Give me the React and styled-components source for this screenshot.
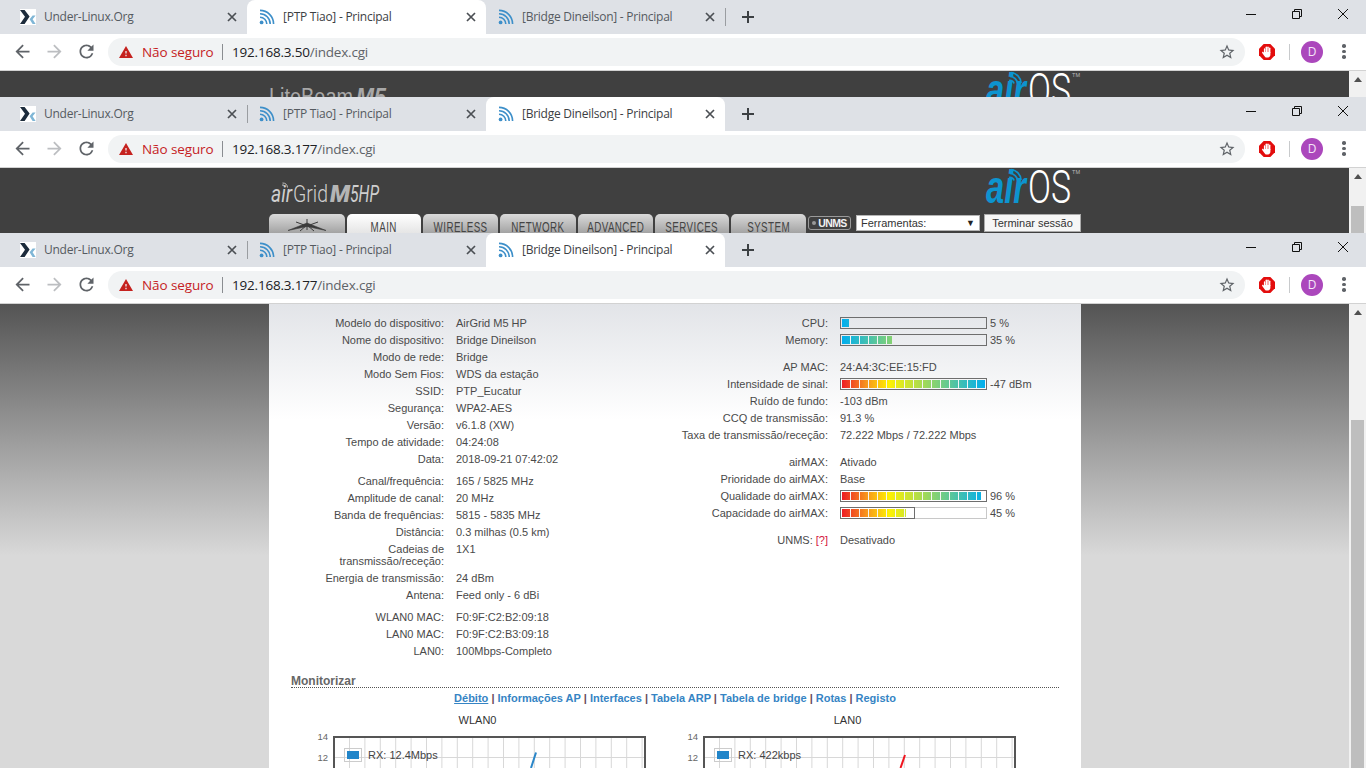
import styled, { createGlobalStyle } from "styled-components";

const GlobalStyle = createGlobalStyle`
  html, body {
    margin: 0;
    height: 768px;
    overflow: hidden;
    background: #404040;
  }
  * { box-sizing: border-box; }
`;

const Browser = styled.div`
  height: ${(p) => p.$height}px;
  display: flex;
  flex-direction: column;
  overflow: hidden;
`;

const TabStrip = styled.div`
  height: 34px;
  flex: none;
  display: flex;
  padding-left: 8px;
  background: #dee1e6;
`;

const Tab = styled.div`
  position: relative;
  width: 239px;
  height: 34px;
  display: flex;
  align-items: center;
  padding: 0 10px 0 12px;
  border-radius: 8px 8px 0 0;
  background: ${(p) => (p.$active ? "#fff" : "transparent")};

  &::after {
    content: "";
    display: ${(p) => (p.$sep ? "block" : "none")};
    position: absolute;
    right: -1px;
    top: 8px;
    width: 1px;
    height: 18px;
    background: #9a9da1;
  }
`;

const TabTitle = styled.span`
  flex: 1;
  margin-left: 8px;
  padding-bottom: 1px;
  font: 12px "Open Sans", "Noto Sans", sans-serif;
  letter-spacing: -0.25px;
  color: ${(p) => (p.$active ? "#3c4043" : "#555a60")};
  white-space: nowrap;
`;

const NewTab = styled.div`
  width: 16px;
  height: 34px;
  margin-left: 15px;
  display: flex;
  align-items: center;
  justify-content: center;
  color: #3c4043;
`;

const WindowControls = styled.div`
  margin-left: auto;
  display: flex;
  height: 28px;
`;

const WindowButton = styled.div`
  width: 46px;
  display: flex;
  align-items: center;
  justify-content: center;
`;

const Toolbar = styled.div`
  height: 37px;
  flex: none;
  display: flex;
  align-items: center;
  padding: 0 0 1px 6px;
  background: #fff;
  border-bottom: 1px solid #d2d2d2;
`;

const NavButton = styled.div`
  width: 32px;
  display: flex;
  justify-content: center;
  color: ${(p) => (p.$disabled ? "#bcbec1" : "#5f6368")};
`;

const Omnibox = styled.div`
  margin-left: 6px;
  flex: 1;
  height: 28px;
  display: flex;
  align-items: center;
  padding: 0 9px 0 11px;
  border-radius: 14px;
  background: #f1f3f4;
  font: 14px "Open Sans", "Noto Sans", sans-serif;
`;

const WarningSvg = styled.svg`
  flex: none;
`;

const Insecure = styled.span`
  margin-left: 9px;
  color: #c5221f;
  font-size: 13.5px;
  letter-spacing: -0.1px;
  width: 72px;
  white-space: nowrap;
`;

const OmniDivider = styled.span`
  width: 1px;
  height: 16px;
  margin: 0 9px 0 8px;
  background: #8a8d91;
`;

const Host = styled.span`
  color: #202124;
  font-size: 13.5px;
  letter-spacing: -0.2px;
`;

const Path = styled.span`
  color: #5f6368;
  font-size: 13.5px;
  letter-spacing: -0.2px;
`;

const StarSlot = styled.div`
  margin-left: auto;
  display: flex;
  color: #5f6368;
`;

const Actions = styled.div`
  width: 121px;
  flex: none;
  display: flex;
  align-items: center;
  padding-left: 14px;
`;

const ActionDivider = styled.span`
  width: 1px;
  height: 16px;
  margin: 0 11px 0 14px;
  background: #c8cacc;
`;

const Avatar = styled.div`
  width: 22px;
  height: 22px;
  border-radius: 50%;
  display: flex;
  align-items: center;
  justify-content: center;
  background: #ab47bc;
  color: #f5e6f8;
  font: 12px "Open Sans", sans-serif;
`;

const MenuDots = styled.div`
  margin-left: 19px;
  display: flex;
  flex-direction: column;
  gap: 2px;

  span {
    width: 3.5px;
    height: 3.5px;
    border-radius: 50%;
    background: #5f6368;
  }
`;

const Viewport = styled.div`
  flex: 1;
  min-height: 0;
  display: flex;
`;

const PageArea = styled.div`
  flex: 1;
  display: flex;
  justify-content: center;
  overflow: hidden;
  background: ${(p) =>
    p.$light ? "linear-gradient(#545454 0, #d9d9d9 252px)" : "#404040"};
`;

const Scrollbar = styled.div`
  width: 17px;
  flex: none;
  display: flex;
  flex-direction: column;
  align-items: center;
  background: #f1f1f1;
  overflow: hidden;
`;

const ScrollArrow = styled.div`
  margin-top: 6px;
  width: 0;
  height: 0;
  border-left: 4px solid transparent;
  border-right: 4px solid transparent;
  border-bottom: 5px solid #505050;
`;

const ScrollThumb = styled.div`
  width: 13px;
  flex: 1;
  margin-top: ${(p) => p.$top - 11}px;
  background: #bebebe;
`;

const Panel = styled.div`
  width: 812px;
  flex: none;
  margin-left: 1px;
`;

const Masthead = styled.div`
  height: 46px;
  display: flex;
  justify-content: space-between;
`;

const NavRow = styled.div`
  height: 26px;
  display: flex;
`;

const NavTab = styled.div`
  width: ${(p) => p.$w}px;
  height: 26px;
  margin-right: 2px;
  display: flex;
  align-items: center;
  justify-content: center;
  border-radius: 5px 5px 0 0;
  color: #444;
  background: ${(p) =>
    p.$active
      ? "linear-gradient(#fff, #dcdcdc)"
      : "linear-gradient(#dadada, #8f8f8f)"};
`;

const NavLabel = styled.span`
  display: inline-block;
  font: 14px "Liberation Sans", Arial, sans-serif;
  letter-spacing: 0.6px;
  transform: scaleX(0.7);
  white-space: nowrap;
`;

const DishSvg = styled.svg`
  margin-bottom: 4px;
`;

const UnmsBadge = styled.div`
  width: 43px;
  height: 14px;
  margin-top: 2px;
  display: flex;
  align-items: center;
  justify-content: center;
  gap: 2px;
  border: 1px solid #9a9a9a;
  border-radius: 3px;
  color: #f2f2f2;
  font: bold 10.5px "Liberation Sans", Arial, sans-serif;
  letter-spacing: -0.6px;

  i {
    width: 4px;
    height: 4px;
    flex: none;
    border-radius: 50%;
    background: #999;
  }
`;

const ToolSelect = styled.div`
  width: 124px;
  height: 16px;
  margin: 1px 0 0 5px;
  display: flex;
  align-items: center;
  justify-content: space-between;
  padding: 0 4px;
  background: #fff;
  border: 1px solid #b5b5b5;
  color: #333;
  font: 11px "Liberation Sans", Arial, sans-serif;

  b {
    font-size: 9px;
    color: #222;
  }
`;

const LogoutButton = styled.div`
  width: 97px;
  height: 18px;
  margin-left: 4px;
  display: flex;
  align-items: center;
  justify-content: center;
  background: #f6f6f6;
  border: 1px solid #ababab;
  color: #333;
  font: 11px "Liberation Sans", Arial, sans-serif;
`;

const StatusPanel = styled.div`
  height: 100%;
  padding: 10px 22px 0;
  background: linear-gradient(#e2e4e8 0, #fff 116px);
  color: #4a4a4a;
  font: 11px "Liberation Sans", Arial, sans-serif;
`;

const Columns = styled.div`
  display: grid;
  grid-template-columns: 387px 1fr;
`;

const Group = styled.div`
  margin-bottom: ${(p) => p.$gap}px;
`;

const InfoRow = styled.div`
  display: flex;
  padding: 2.5px 0;
  line-height: 12px;
`;

const Label = styled.div`
  width: ${(p) => p.$w}px;
  flex: none;
  margin-left: ${(p) => p.$indent}px;
  text-align: right;
`;

const Value = styled.div`
  margin-left: 12px;
  display: flex;
  align-items: flex-start;
  white-space: nowrap;
`;

const Hint = styled.span`
  color: #d3143c;
`;

const Track = styled.div`
  position: relative;
  width: 147px;
  height: 12px;
  padding: 1px;
  margin-right: 3px;
  border: 1px solid ${(p) => (p.$frame ? "#c8c8c8" : "#6e6e6e")};
  background: ${(p) => (p.$frame ? "#fff" : "transparent")};
`;

const SCALE = "#ed1c24 0%, #f7941d 17%, #fff200 33%, #00aeef 100%";

const Fill = styled.div`
  height: 100%;
  width: ${(p) => p.$pct}%;
  background-image:
    repeating-linear-gradient(90deg, transparent 0 8px, #f4f4f4 8px 9px),
    linear-gradient(${(p) => (p.$cool ? "270deg" : "90deg")}, ${SCALE});
  background-size: auto, 143px 100%;
`;

const FillFrame = styled.div`
  position: absolute;
  left: -1px;
  top: -1px;
  bottom: -1px;
  width: 75px;
  border: 1px solid #6e6e6e;
`;

const SectionTitle = styled.div`
  margin-top: 16px;
  border-bottom: 1px dotted #555;
  color: #666;
  font: bold 12px/12px "Liberation Sans", Arial, sans-serif;
`;

const LinkBar = styled.div`
  margin-top: 2px;
  text-align: center;
  font-weight: bold;
  line-height: 16px;
  color: #6a4a5a;
`;

const StatusLink = styled.span`
  color: #3584c4;
  text-decoration: ${(p) => (p.$current ? "underline" : "none")};
`;

const Charts = styled.div`
  margin: 6px 0 0 18px;
  display: grid;
  grid-template-columns: 337px 337px;
  column-gap: 33px;
`;

const ChartBox = styled.div`
  position: relative;
`;

const ChartTitle = styled.div`
  text-align: center;
  color: #333;
  line-height: 16px;
`;

const Legend = styled.div`
  position: absolute;
  left: 35px;
  top: 36px;
  display: flex;
  align-items: center;
  gap: 6px;
  color: #444;
`;

const LegendSwatch = styled.div`
  width: 18px;
  height: 14px;
  padding: 2px;
  border: 1px solid #ccc;

  &::before {
    content: "";
    display: block;
    height: 100%;
    background: #2185c9;
  }
`;

const Rss = () => (
  <svg width="16" height="16" viewBox="0 0 16 16" fill="none" stroke="#3d8fc9" strokeWidth="1.6">
    <circle cx="2.6" cy="13.4" r="1.9" fill="#3d8fc9" stroke="none" />
    <path d="M1 8.2a6.8 6.8 0 0 1 6.8 6.8" />
    <path d="M1 4.8A10.2 10.2 0 0 1 11.2 15" />
    <path d="M1 1.4A13.6 13.6 0 0 1 14.6 15" />
  </svg>
);

const UnderLinuxIcon = () => (
  <svg width="16" height="16" viewBox="0 0 16 16">
    <rect width="16" height="16" fill="#fff" />
    <path d="M0 1h4.6l5 6.6-5 7.4H0l5-7.3z" fill="#1d2c3c" />
    <path d="M15.6 6.6h-3l-3 3.6 3 4.8h3l-3-4.7z" fill="#7fb6d6" />
  </svg>
);

const CloseIcon = () => (
  <svg width="10" height="10" viewBox="0 0 10 10" stroke="#4b4f54" strokeWidth="1.7">
    <path d="M1 1l8 8M9 1l-8 8" />
  </svg>
);

const Warning = () => (
  <WarningSvg width="14" height="14" viewBox="1 2 22 19" fill="#c5221f">
    <path d="M1 21h22L12 2 1 21zm12-3h-2v-2h2v2zm0-4h-2v-4h2v4z" />
  </WarningSvg>
);

const NavIcon = ({ d, flip, size = 21 }) => (
  <svg width={size} height={size} viewBox="0 0 24 24" fill="currentColor" transform={flip ? "scale(-1 1)" : undefined}>
    <path d={d} />
  </svg>
);

const ARROW = "M20 11H7.83l5.59-5.59L12 4l-8 8 8 8 1.41-1.41L7.83 13H20v-2z";
const RELOAD =
  "M17.65 6.35A7.958 7.958 0 0 0 12 4c-4.42 0-7.99 3.58-7.99 8s3.57 8 7.99 8c3.73 0 6.84-2.55 7.73-6h-2.08A5.99 5.99 0 0 1 12 18c-3.31 0-6-2.69-6-6s2.69-6 6-6c1.66 0 3.14.69 4.22 1.78L13 11h7V4l-2.35 2.35z";
const STAR =
  "M22 9.24l-7.19-.62L12 2 9.19 8.63 2 9.24l5.46 4.73L5.82 21 12 17.27 18.18 21l-1.63-7.03L22 9.24zM12 15.4l-3.76 2.27 1-4.28-3.32-2.88 4.38-.38L12 6.1l1.71 4.04 4.38.38-3.32 2.88 1 4.28L12 15.4z";

const StopIcon = () => (
  <svg width="16" height="16" viewBox="0 0 16 16">
    <path d="M4.7 0h6.6L16 4.7v6.6L11.3 16H4.7L0 11.3V4.7z" fill="#e30d0d" />
    <g fill="#fff">
      <rect x="4.9" y="4.2" width="1.4" height="5" rx="0.7" />
      <rect x="6.6" y="2.6" width="1.4" height="6" rx="0.7" />
      <rect x="8.3" y="2.6" width="1.4" height="6" rx="0.7" />
      <rect x="10" y="3.6" width="1.4" height="5.5" rx="0.7" />
      <path d="M4.9 8h6.5v2.6c0 1.6-.9 2.9-2.4 2.9H7.4c-1 0-1.5-.6-2-1.5L3.2 8.9c-.4-.8.5-1.4 1.1-.8L4.9 8.8z" />
    </g>
  </svg>
);

const AirOsLogo = () => (
  <svg width="96" height="46" viewBox="0 0 96 46">
    <text
      x="1"
      y="35"
      fontFamily="'Liberation Sans', Arial, sans-serif"
      fontSize="47"
      fontWeight="bold"
      fontStyle="italic"
      fill="#0d94cf"
      textLength="40"
      lengthAdjust="spacingAndGlyphs"
    >
      air
    </text>
    <text
      x="43"
      y="35"
      fontFamily="Roboto, 'Liberation Sans', sans-serif"
      fontSize="47"
      fontWeight="300"
      fill="#fff"
      textLength="43"
      lengthAdjust="spacingAndGlyphs"
    >
      OS
    </text>
    <text x="87" y="6" fontFamily="'Liberation Sans', Arial, sans-serif" fontSize="6" fill="#bbb" textLength="8" lengthAdjust="spacingAndGlyphs">
      TM
    </text>
    <g fill="none" stroke="#0d94cf" strokeWidth="1.7">
      <path d="M24 9.5a4 4 0 0 1 5 3" />
      <path d="M25 5.5a7.5 7.5 0 0 1 7.5 7" />
      <path d="M26 1.5a11 11 0 0 1 10 10.5" />
    </g>
  </svg>
);

const AirGridLogo = () => (
  <svg width="112" height="46" viewBox="0 0 112 46" fontFamily="Roboto, 'Liberation Sans', sans-serif" fill="#cfcfcf">
    <text x="2" y="34" fontSize="24" fontStyle="italic" textLength="21" lengthAdjust="spacingAndGlyphs">
      air
    </text>
    <text x="24" y="34" fontSize="24" fontWeight="300" textLength="35" lengthAdjust="spacingAndGlyphs">
      Grid
    </text>
    <text x="61" y="34" fontSize="24" fontWeight="900" fontStyle="italic" textLength="20" lengthAdjust="spacingAndGlyphs" fill="#b5b5b5">
      M
    </text>
    <text x="81" y="34" fontSize="23" fontStyle="italic" textLength="29" lengthAdjust="spacingAndGlyphs">
      5HP
    </text>
    <g fill="none" stroke="#cfcfcf" strokeWidth="0.9">
      <path d="M13 17a2.5 2.5 0 0 1 3 2" />
      <path d="M13.5 15a5 5 0 0 1 5 4.5" />
    </g>
  </svg>
);

const LiteBeamLogo = () => (
  <svg width="122" height="46" viewBox="0 0 122 46" fontFamily="'Liberation Sans', Arial, sans-serif" fill="#a8a8a8">
    <text x="0" y="34" fontSize="23" textLength="84" lengthAdjust="spacingAndGlyphs">
      LiteBeam
    </text>
    <text x="87" y="34" fontSize="23" fontWeight="bold" fontStyle="italic" textLength="30" lengthAdjust="spacingAndGlyphs">
      M5
    </text>
  </svg>
);

const DishIcon = () => (
  <DishSvg width="40" height="14" viewBox="0 0 40 14" stroke="#3a3a3a" fill="#3a3a3a">
    <path d="M1 12.5L20 5l19 7.5-19-4z" strokeWidth="0.6" />
    <path d="M20 1v11M9 4l11 4 11-4M13 13l7-6 7 6" strokeWidth="1" fill="none" />
  </DishSvg>
);

const NAV = [
  { w: 76, icon: true },
  { w: 74, label: "MAIN", active: true },
  { w: 75, label: "WIRELESS" },
  { w: 76, label: "NETWORK" },
  { w: 75, label: "ADVANCED" },
  { w: 74, label: "SERVICES" },
  { w: 75, label: "SYSTEM" },
];

const Header = ({ logo }) => (
  <Panel>
    <Masthead>
      {logo}
      <AirOsLogo />
    </Masthead>
    <NavRow>
      {NAV.map((tab, i) => (
        <NavTab key={i} $w={tab.w} $active={tab.active}>
          {tab.icon ? <DishIcon /> : <NavLabel>{tab.label}</NavLabel>}
        </NavTab>
      ))}
      <UnmsBadge>
        <i />
        UNMS
      </UnmsBadge>
      <ToolSelect>
        Ferramentas:
        <b>▼</b>
      </ToolSelect>
      <LogoutButton>Terminar sessão</LogoutButton>
    </NavRow>
  </Panel>
);

const LEFT_GROUPS = [
  {
    gap: 5,
    rows: [
      ["Modelo do dispositivo:", "AirGrid M5 HP"],
      ["Nome do dispositivo:", "Bridge Dineilson"],
      ["Modo de rede:", "Bridge"],
      ["Modo Sem Fios:", "WDS da estação"],
      ["SSID:", "PTP_Eucatur"],
      ["Segurança:", "WPA2-AES"],
      ["Versão:", "v6.1.8 (XW)"],
      ["Tempo de atividade:", "04:24:08"],
      ["Data:", "2018-09-21 07:42:02"],
    ],
  },
  {
    gap: 5,
    rows: [
      ["Canal/frequência:", "165 / 5825 MHz"],
      ["Amplitude de canal:", "20 MHz"],
      ["Banda de frequências:", "5815 - 5835 MHz"],
      ["Distância:", "0.3 milhas (0.5 km)"],
      ["Cadeias de transmissão/receção:", "1X1"],
      ["Energia de transmissão:", "24 dBm"],
      ["Antena:", "Feed only - 6 dBi"],
    ],
  },
  {
    gap: 0,
    rows: [
      ["WLAN0 MAC:", "F0:9F:C2:B2:09:18"],
      ["LAN0 MAC:", "F0:9F:C2:B3:09:18"],
      ["LAN0:", "100Mbps-Completo"],
    ],
  },
];

const Bar = ({ pct, cool, frame, text }) => (
  <>
    <Track $frame={frame}>
      <Fill $pct={pct} $cool={cool} />
      {frame && <FillFrame />}
    </Track>
    {text}
  </>
);

const RIGHT_GROUPS = [
  {
    gap: 10,
    rows: [
      ["CPU:", <Bar pct={5} cool text="5 %" />],
      ["Memory:", <Bar pct={35} cool text="35 %" />],
    ],
  },
  {
    gap: 10,
    rows: [
      ["AP MAC:", "24:A4:3C:EE:15:FD"],
      ["Intensidade de sinal:", <Bar pct={100} text="-47 dBm" />],
      ["Ruído de fundo:", "-103 dBm"],
      ["CCQ de transmissão:", "91.3 %"],
      ["Taxa de transmissão/receção:", "72.222 Mbps / 72.222 Mbps"],
    ],
  },
  {
    gap: 10,
    rows: [
      ["airMAX:", "Ativado"],
      ["Prioridade do airMAX:", "Base"],
      ["Qualidade do airMAX:", <Bar pct={97} text="96 %" />],
      ["Capacidade do airMAX:", <Bar pct={45} frame text="45 %" />],
    ],
  },
  {
    gap: 0,
    rows: [
      [
        <>
          UNMS: <Hint>[?]</Hint>
        </>,
        "Desativado",
      ],
    ],
  },
];

const InfoColumn = ({ groups, w, indent }) => (
  <div>
    {groups.map((group, i) => (
      <Group key={i} $gap={group.gap}>
        {group.rows.map((row, j) => (
          <InfoRow key={j}>
            <Label $w={w} $indent={indent}>
              {row[0]}
            </Label>
            <Value>{row[1]}</Value>
          </InfoRow>
        ))}
      </Group>
    ))}
  </div>
);

const LINKS = [
  "Débito",
  "Informações AP",
  "Interfaces",
  "Tabela ARP",
  "Tabela de bridge",
  "Rotas",
  "Registo",
];

const Plot = ({ color, line }) => {
  const verticals = Array.from({ length: 20 }, (_, i) => 40.5 + i * 15.4);
  const horizontals = [29.5, 50, 70.5, 91];
  return (
    <svg width="337" height="110" viewBox="0 0 337 110">
      {verticals.map((x) => (
        <line key={x} x1={x} x2={x} y1="9" y2="110" stroke="#d8d8d8" />
      ))}
      {horizontals.map((y) => (
        <line key={y} x1="25" x2="336" y1={y} y2={y} stroke="#d8d8d8" />
      ))}
      <rect x="25" y="9" width="311" height="120" fill="none" stroke="#555" strokeWidth="2" />
      <path d={line} fill="none" stroke={color} strokeWidth="2" />
      <text x="19" y="12" textAnchor="end" fontSize="9.5" fill="#666" fontFamily="'Liberation Sans', Arial, sans-serif">
        14
      </text>
      <text x="19" y="33" textAnchor="end" fontSize="9.5" fill="#666" fontFamily="'Liberation Sans', Arial, sans-serif">
        12
      </text>
    </svg>
  );
};

const Chart = ({ title, rx, color, line }) => (
  <ChartBox>
    <ChartTitle>{title}</ChartTitle>
    <Plot color={color} line={line} />
    <Legend>
      <LegendSwatch />
      RX: {rx}
    </Legend>
  </ChartBox>
);

const Status = () => (
  <Panel>
    <StatusPanel>
      <Columns>
        <InfoColumn groups={LEFT_GROUPS} w={124} indent={29} />
        <InfoColumn groups={RIGHT_GROUPS} w={150} indent={0} />
      </Columns>
      <SectionTitle>Monitorizar</SectionTitle>
      <LinkBar>
        {LINKS.map((link, i) => (
          <span key={link}>
            {i > 0 && " | "}
            <StatusLink $current={i === 0}>{link}</StatusLink>
          </span>
        ))}
      </LinkBar>
      <Charts>
        <Chart title="WLAN0" rx="12.4Mbps" color="#2a86c8" line="M227 24.5L222 40" />
        <Chart title="LAN0" rx="422kbps" color="#f0141e" line="M226 27L221.5 40" />
      </Charts>
    </StatusPanel>
  </Panel>
);

const TABS = [
  { title: "Under-Linux.Org", icon: <UnderLinuxIcon /> },
  { title: "[PTP Tiao] - Principal", icon: <Rss /> },
  { title: "[Bridge Dineilson] - Principal", icon: <Rss /> },
];

const Window = ({ height, active, host, light, thumb, children }) => (
  <Browser $height={height}>
    <TabStrip>
      {TABS.map((tab, i) => (
        <Tab key={i} $active={i === active} $sep={i !== active && i + 1 !== active}>
          {tab.icon}
          <TabTitle $active={i === active}>{tab.title}</TabTitle>
          <CloseIcon />
        </Tab>
      ))}
      <NewTab>
        <svg width="12" height="12" viewBox="0 0 12 12" stroke="currentColor" strokeWidth="2">
          <path d="M6 0v12M0 6h12" />
        </svg>
      </NewTab>
      <WindowControls>
        <WindowButton>
          <svg width="10" height="10" viewBox="0 0 10 10" stroke="#111">
            <path d="M0 5.5h10" />
          </svg>
        </WindowButton>
        <WindowButton>
          <svg width="10" height="10" viewBox="0 0 10 10" fill="none" stroke="#111">
            <path d="M.5 2.5h7v7h-7zM2.5 2.5v-2h7v7h-2" />
          </svg>
        </WindowButton>
        <WindowButton>
          <svg width="10" height="10" viewBox="0 0 10 10" stroke="#111">
            <path d="M0 0l10 10M10 0L0 10" />
          </svg>
        </WindowButton>
      </WindowControls>
    </TabStrip>
    <Toolbar>
      <NavButton>
        <NavIcon d={ARROW} />
      </NavButton>
      <NavButton $disabled>
        <NavIcon d={ARROW} flip />
      </NavButton>
      <NavButton>
        <NavIcon d={RELOAD} />
      </NavButton>
      <Omnibox>
        <Warning />
        <Insecure>Não seguro</Insecure>
        <OmniDivider />
        <Host>{host}</Host>
        <Path>/index.cgi</Path>
        <StarSlot>
          <NavIcon d={STAR} size={18} />
        </StarSlot>
      </Omnibox>
      <Actions>
        <StopIcon />
        <ActionDivider />
        <Avatar>D</Avatar>
        <MenuDots>
          <span />
          <span />
          <span />
        </MenuDots>
      </Actions>
    </Toolbar>
    <Viewport>
      <PageArea $light={light}>{children}</PageArea>
      <Scrollbar>
        <ScrollArrow />
        <ScrollThumb $top={thumb} />
      </Scrollbar>
    </Viewport>
  </Browser>
);

export default function App() {
  return (
    <>
      <GlobalStyle />
      <Window height={97} active={1} host="192.168.3.50" thumb={200}>
        <Header logo={<LiteBeamLogo />} />
      </Window>
      <Window height={136} active={2} host="192.168.3.177" thumb={38}>
        <Header logo={<AirGridLogo />} />
      </Window>
      <Window height={535} active={2} host="192.168.3.177" light thumb={116}>
        <Status />
      </Window>
    </>
  );
}
